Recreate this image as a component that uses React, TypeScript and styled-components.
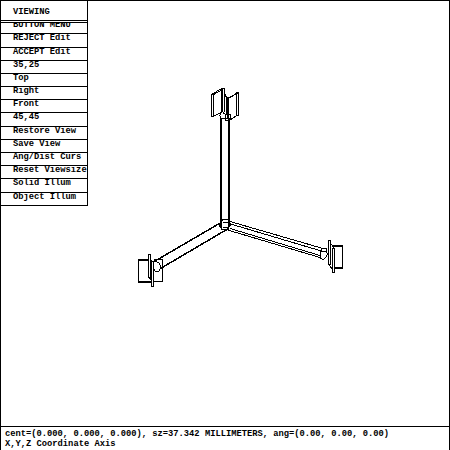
import React from 'react';
import styled, { createGlobalStyle } from 'styled-components';

const Global = createGlobalStyle`
  *, *::before, *::after { box-sizing: border-box; }
  body { margin: 0; background: #fff; color: #000; }
`;

const Screen = styled.main`
  width: 450px;
  height: 450px;
  display: grid;
  grid-template-rows: 425px 24px;
  border: 1px solid #000;
  border-bottom: 0;
  background: #fff;
  font: bold 8.78px/10px "Liberation Mono", "Courier New", monospace;
  white-space: pre;
  overflow: hidden;
`;

const Workspace = styled.section`
  display: grid;
  grid-template-columns: 87px 361px;
  min-height: 0;
`;

const Menu = styled.nav`
  height: 205px;
  border-right: 1px solid #000;
`;

const Title = styled.header`
  height: 22px;
  padding: 6px 0 0 12px;
  border-bottom: 3px double #000;
`;

const Item = styled.div<{ $height: number; $clipped?: boolean }>`
  height: ${p => p.$height}px;
  padding-left: 12px;
  border-bottom: 1px solid #000;
  overflow: hidden;
  line-height: ${p => (p.$clipped ? 5 : 9)}px;
`;

const Drawing = styled.svg`
  display: block;
  width: 361px;
  height: 425px;
  fill: none;
  stroke: #000;
  shape-rendering: crispEdges;
`;

const Status = styled.footer`
  border-top: 1px solid #000;
  padding: 2px 0 0 4px;
  line-height: 10px;
`;

const items: [string, number][] = [
  ['BUTTON MENU', 11], ['REJECT Edit', 14], ['ACCEPT Edit', 13],
  ['35,25', 13], ['Top', 13], ['Right', 13], ['Front', 13],
  ['45,45', 14], ['Restore View', 13], ['Save View', 13],
  ['Ang/Dist Curs', 13], ['Reset Viewsize', 13],
  ['Solid Illum', 14], ['Object Illum', 13],
];

function Axes() {
  return (
    <Drawing viewBox="88 1 361 425" aria-label="Coordinate axes">
      {/* Vertical arm and its end plates */}
      <path strokeWidth="2" d="M221 118V226M229 118V226" />
      <path d="M211.5 94.5H213.5V116.5H211.5ZM211.5 94.5L221.5 88.5H224.5V92M213.5 94.5L222 90M213.5 116.5L222.5 111.5" />
      <path strokeWidth="2" d="M222 89V112" />
      <path d="M224.5 92V112M224 92L226.5 97.5V114M225.5 97.5H228.5" />
      <path strokeWidth="2" d="M228 98V119" />
      <path d="M235.5 93.5L237.5 92.5H238.5V115.5H236.5V93.5L228.5 98M238 93L229 98M237 115.5L229 120.5" />
      <path d="M221.5 112.5L219.5 115.5L221.5 118.5H226.5M223 112.5L226.5 115.5M225.5 114.5H230.5V118.5L228.5 120.5H225.5Z" />
      {/* Junction */}
      <path d="M221.5 219.5H228.5V229.5H221.5ZM222 221.5L219.5 224.5V226L222 229M228 221L230 224V226L226 230M222.5 222.5H227.5M223 220L220 223M222.5 227.5H228" />
      {/* Left arm */}
      <path strokeWidth="1.5" d="M221 222.6L153 262.2M228 228.8L160 268.8" />
      <path d="M148 259.5H138.5V282.5H151M138 260.5H148M138 281.5H151M153 281.5H162.5V259.5H154" />
      <path d="M148.5 254.5H150.5V277.5H148.5ZM151.5 261.5H153.5V286.5H151.5ZM150.5 259L152.5 262M149 277L151.5 281" />
      <path d="M153 262.5L155.5 261.5L158.5 262.5L160.5 265.5V268.5L158.5 271.5H155.5L153.5 268.5" />
      {/* Right arm */}
      <path d="M230 221.5L323 248.5M229 223.5L323 251.5M230 228.5L320 255.5M226 229.5L320 257.5" />
      <path d="M320.5 251.5L322.5 248.5H326.5V251.5L327.5 254L326 257L323 260L321 258.5L320.5 255ZM322 251.5H326" />
      <path d="M328.5 240.5H330.5V264.5H328.5ZM332.5 248.5H334.5V272.5H332.5ZM330.5 243L334.5 249M329 264L332.5 270" />
      <path d="M332 245.5H342.5V268.5H334M333 246.5H342M335 267.5H342" />
    </Drawing>
  );
}

export default function App() {
  return (
    <>
      <Global />
      <Screen>
        <Workspace>
          <Menu>
            <Title>VIEWING</Title>
            {items.map(([label, height], i) => (
              <Item key={label} $height={height} $clipped={i === 0}>{label}</Item>
            ))}
          </Menu>
          <Axes />
        </Workspace>
        <Status>
          <div>cent=(0.000, 0.000, 0.000), sz=37.342 MILLIMETERS, ang=(0.00, 0.00, 0.00)</div>
          <div>X,Y,Z Coordinate Axis</div>
        </Status>
      </Screen>
    </>
  );
}
